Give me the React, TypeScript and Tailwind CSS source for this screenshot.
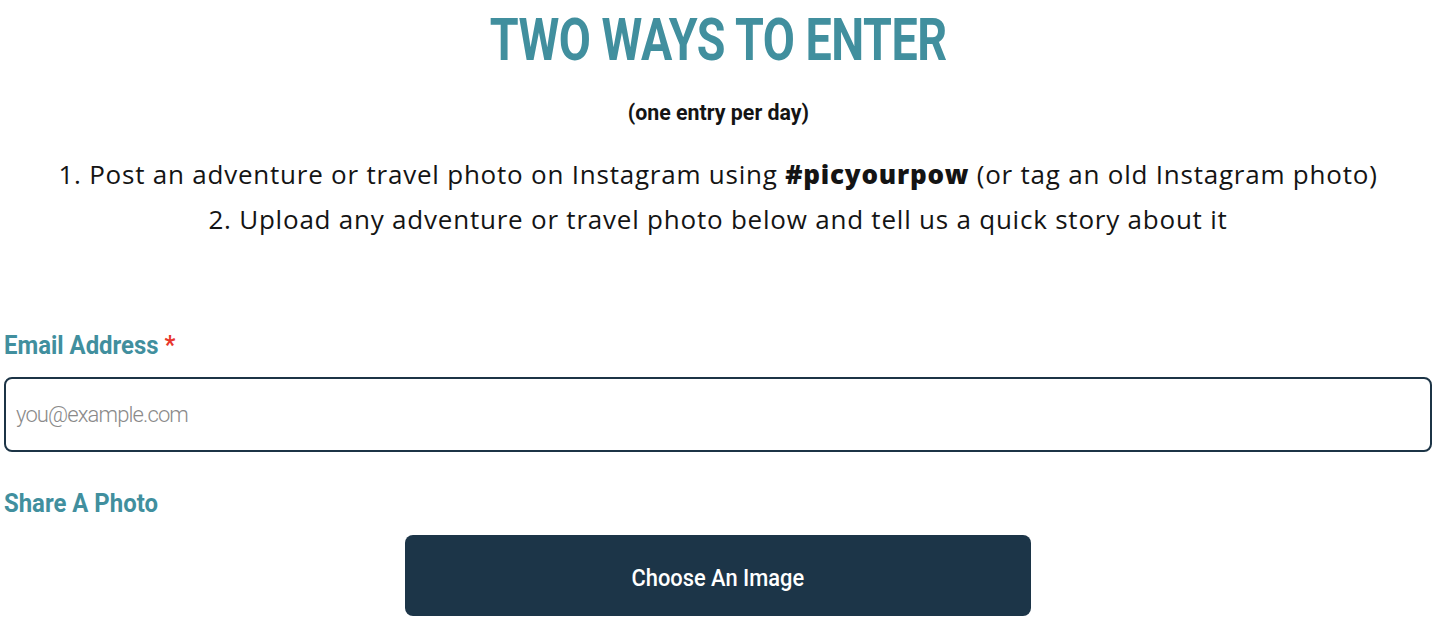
const cond = "font-['Roboto',sans-serif] inline-block"

export default function App() {
  return (
    <div className="bg-white min-h-screen w-full pl-1 pr-[6px] text-[#141414]">
      <div className="text-center pt-[10px]">
        <span className={`${cond} text-[#418f9e] font-bold text-[59px] leading-none scale-x-[0.79] tracking-[-0.01em]`}>
          TWO WAYS TO ENTER
        </span>
      </div>
      <div className="text-center mt-[33px]">
        <span className={`${cond} font-bold text-[22px] leading-none scale-x-[0.97]`}>(one entry per day)</span>
      </div>
      <div className="font-['Open_Sans',sans-serif] text-center text-[26px] leading-[45px] tracking-[0.03em] mt-[26px]">
        <div>
          1. Post an adventure or travel photo on Instagram using <b className="font-extrabold">#picyourpow</b> (or tag an old Instagram photo)
        </div>
        <div>2. Upload any adventure or travel photo below and tell us a quick story about it</div>
      </div>

      <div className="mt-[90px]">
        <label className={`${cond} origin-left scale-x-[0.92] text-[#418f9e] font-bold text-[26px] leading-none`}>
          Email Address <span className="text-[#e8372c]">*</span>
        </label>
        <input
          type="email"
          placeholder="you@example.com"
          className="font-['Roboto',sans-serif] font-light block mt-[17px] w-full h-[75px] rounded-[8px] border-2 border-[#1c3446] px-[10px] text-[22px] tracking-[-0.04em] placeholder:text-[#8a8a8a] outline-none"
        />
        <div className="mt-[38px]">
          <span className={`${cond} origin-left scale-x-[0.92] text-[#418f9e] font-bold text-[26px] leading-none`}>Share A Photo</span>
        </div>
        <div className="flex justify-center mt-[17px]">
          <button className="w-[626px] h-[81px] pt-[8px] rounded-[8px] bg-[#1c3548] text-white">
            <span className={`${cond} scale-x-[0.95] text-[23px] font-medium`}>Choose An Image</span>
          </button>
        </div>
      </div>
    </div>
  )
}
